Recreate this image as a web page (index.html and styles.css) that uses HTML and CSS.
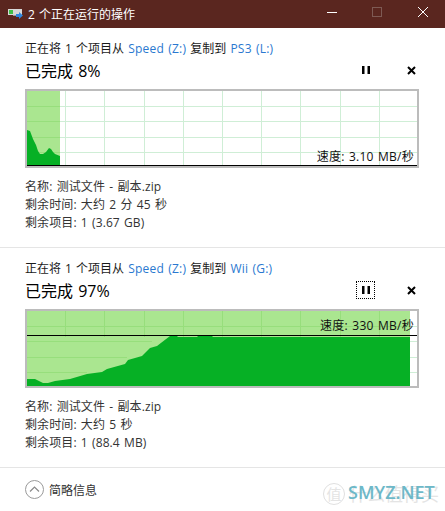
FILE: index.html
```html
<!DOCTYPE html>
<html lang="zh-CN">
<head>
    <meta charset="UTF-8">
    <title>2 个正在运行的操作</title>
    <link rel="stylesheet" href="styles.css">
</head>
<body>

    <!-- Title bar -->
    <div class="titlebar">
        <svg class="app-icon" width="16" height="12" viewBox="0 0 16 12">
            <rect x="0" y="0" width="14" height="6" fill="#d8d8d8"/>
            <rect x="1" y="1" width="4" height="4" fill="#3fc04a"/>
            <rect x="5" y="6" width="5" height="1" fill="#9a9a9a"/>
            <path d="M8 5h3V3l4 3.500-4 3.500V8H8z" fill="#2e86de"/>
        </svg>
        <span class="title-text">2 个正在运行的操作</span>
        <div class="window-buttons">
            <svg width="45" height="28" viewBox="0 0 45 28"><path d="M17 12.500h10" stroke="#fff" fill="none"/></svg>
            <svg width="45" height="28" viewBox="0 0 45 28"><rect x="17.500" y="7.500" width="9" height="9" stroke="#7e5a54" fill="none"/></svg>
            <svg width="45" height="28" viewBox="0 0 45 28"><path d="M18 7l10 10M28 7L18 17" stroke="#fff" fill="none"/></svg>
        </div>
    </div>

    <!-- First copy -->
    <div class="operation first">
        <div class="op-line">正在将 1 个项目从 <a href="#">Speed (Z:)</a> 复制到 <a href="#">PS3 (L:)</a></div>
        <div class="status-row">
            <span class="percent">已完成 8%</span>
            <span class="btn-pause"><svg width="8" height="10" viewBox="0 0 8 10"><path d="M0 1h2.500v8H0zM5.500 1H8v8H5.500z"/></svg></span>
            <span class="btn-cancel"><svg width="9" height="9" viewBox="0 0 9 9"><path d="M1 1l7 7M8 1L1 8" stroke="#000" stroke-width="2" fill="none"/></svg></span>
        </div>
        <div class="chart">
            <svg width="390" height="75" viewBox="0 0 390 75">
                <rect x="0" y="0" width="33" height="75" fill="#aae690"/>
                <path class="grid" d="M38.500 0v75M77.500 0v75M117.500 0v75M156.500 0v75M195.500 0v75M234.500 0v75M273.500 0v75M313.500 0v75M352.500 0v75M33 15.500h357M33 30.500h357M33 46.500h357M33 61.500h357"/>
                <path class="grid-on-fill" d="M0 15.500h33M0 30.500h33M0 46.500h33M0 61.500h33"/>
                <path d="M0 75V39L3 40 6 48 9 54 11 60 13 63 16 63 19 61 22 57 24 58 26 61 28 63 33 65V75z" fill="#06b025"/>
                <path d="M0 74.500h390" stroke="#000" fill="none"/>
            </svg>
            <span class="speed">速度: 3.10 MB/秒</span>
        </div>
        <div class="details">
            <div>名称: 测试文件 - 副本.zip</div>
            <div>剩余时间: 大约 2 分 45 秒</div>
            <div>剩余项目: 1 (3.67 GB)</div>
        </div>
    </div>

    <!-- Second copy -->
    <div class="operation">
        <div class="op-line">正在将 1 个项目从 <a href="#">Speed (Z:)</a> 复制到 <a href="#">Wii (G:)</a></div>
        <div class="status-row">
            <span class="percent">已完成 97%</span>
            <span class="btn-pause focused"><svg width="8" height="10" viewBox="0 0 8 10"><path d="M0 1h2.500v8H0zM5.500 1H8v8H5.500z"/></svg></span>
            <span class="btn-cancel"><svg width="9" height="9" viewBox="0 0 9 9"><path d="M1 1l7 7M8 1L1 8" stroke="#000" stroke-width="2" fill="none"/></svg></span>
        </div>
        <div class="chart">
            <svg width="390" height="75" viewBox="0 0 390 75">
                <rect x="0" y="0" width="383" height="75" fill="#aae690"/>
                <path class="grid" d="M383 15.500h7M383 30.500h7M383 46.500h7M383 61.500h7"/>
                <path class="grid-on-fill" d="M38.500 0v26M77.500 0v26M117.500 0v26M156.500 0v26M195.500 0v26M234.500 0v26M273.500 0v26M313.500 0v26M352.500 0v26M0 15.500h383M0 30.500h125M0 46.500h100M0 61.500h60"/>
                <path d="M0 75V68H8L16 72H21L28 70 43 68 60 63 75 61 80 58 98 53 101 49 115 45 123 37 130 35 143 25H150L151 26H170L171 25H185L186 26H383V75z" fill="#06b025"/>
                <path d="M0 24.500h390" stroke="#000" fill="none"/>
            </svg>
            <span class="speed high">速度: 330 MB/秒</span>
        </div>
        <div class="details">
            <div>名称: 测试文件 - 副本.zip</div>
            <div>剩余时间: 大约 5 秒</div>
            <div>剩余项目: 1 (88.4 MB)</div>
        </div>
    </div>

    <!-- Footer -->
    <div class="footer">
        <svg width="19" height="19" viewBox="0 0 19 19">
            <circle cx="9.500" cy="9.500" r="9" fill="none" stroke="#9a9a9a"/>
            <path d="M5 11.500l4.500-4.500 4.500 4.500" fill="none" stroke="#8a8a8a" stroke-width="1.200"/>
        </svg>
        <span>简略信息</span>
    </div>

    <!-- Watermark over the corner -->
    <div class="watermark">
        <span class="wm-grey"><span class="wm-circle">值</span>什么值得买</span>
        <span class="wm-teal">SMYZ.NET</span>
    </div>

</body>
</html>
```
FILE: styles.css
```css
body {
    margin: 0;
    width: 445px;
    height: 511px;
    overflow: hidden;
    position: relative;
    background-color: #fff;
    color: #1a1a1a;
    font-family: "Open Sans", "Noto Sans CJK SC", sans-serif;
    font-size: 12px;
    word-spacing: 1px;
}

/* Title bar */
.titlebar {
    height: 28px;
    background-color: #5a261f;
    color: #fff;
    display: flex;
    align-items: center;
    padding-left: 8px;
}

.app-icon {
    margin-right: 4px;
    margin-top: 2px;
}

.window-buttons {
    margin-left: auto;
    display: flex;
}

.window-buttons svg {
    display: block;
}

/* Operations */
.operation {
    padding: 13px 25px 0;
    height: 219px;
    box-sizing: border-box;
}

.operation.first {
    height: 220px;
    border-bottom: 1px solid #e5e5e5;
}

.op-line {
    line-height: 16px;
}

.op-line a {
    color: #2a78d0;
    text-decoration: none;
    letter-spacing: 0.2px;
}

.status-row {
    display: flex;
    align-items: center;
    height: 24px;
    margin-top: 1px;
    margin-bottom: 7px;
}

.percent {
    font-size: 16px;
    color: #000;
}

.btn-pause {
    margin-left: auto;
    width: 19px;
    height: 18px;
    display: flex;
    align-items: center;
    justify-content: center;
    box-sizing: border-box;
    margin-right: 32px;
}

.btn-pause.focused {
    border: 1px dotted #000;
}

.btn-cancel {
    width: 9px;
    display: flex;
    margin-right: 4px;
}

/* Graph */
.chart {
    width: 394px;
    height: 79px;
    box-sizing: border-box;
    border: 2px solid #bcbcbc;
    position: relative;
}

.chart svg {
    display: block;
}

.grid {
    stroke: #cfeed6;
    fill: none;
}

.grid-on-fill {
    stroke: #97de7c;
    fill: none;
}

.speed {
    position: absolute;
    right: 3px;
    bottom: 1px;
    line-height: 16px;
    color: #111;
    letter-spacing: 0.25px;
}

.speed.high {
    bottom: auto;
    top: 7px;
}

.details {
    margin-top: 10px;
    line-height: 18px;
    color: #333;
    letter-spacing: 0.1px;
}

/* Footer */
.footer {
    border-top: 1px solid #e5e5e5;
    padding: 12px 25px;
    display: flex;
    align-items: center;
    gap: 5px;
    color: #333;
}

/* Watermark */
.watermark {
    position: absolute;
    left: 323px;
    top: 483px;
    width: 122px;
    height: 28px;
}

.wm-grey {
    position: absolute;
    left: 0;
    top: 0;
    display: flex;
    align-items: center;
    gap: 4px;
    font-size: 18px;
    line-height: 22px;
    color: #e4e4e4;
    white-space: nowrap;
}

.wm-circle {
    width: 20px;
    height: 20px;
    line-height: 20px;
    font-size: 15px;
    text-align: center;
    border: 1px solid #e0e0e0;
    border-radius: 50%;
}

.wm-teal {
    position: absolute;
    left: 25px;
    top: -3px;
    font-size: 18px;
    font-weight: 600;
    color: #6db8c8;
}
```
